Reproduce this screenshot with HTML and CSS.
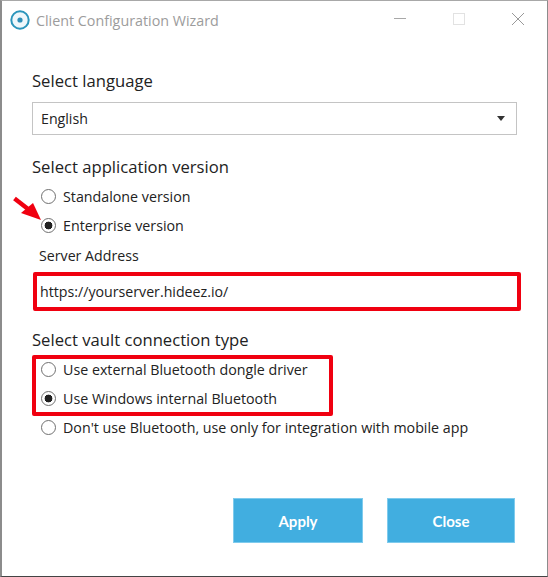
FILE: index.html
```html
<!DOCTYPE html>
<html lang="en">
  <head>
    <meta charset="UTF-8" />
    <title>Client Configuration Wizard</title>
    <link rel="stylesheet" href="styles.css">
  </head>
  <body>
    <main class="window">
      <header class="titlebar">
        <svg class="app-icon" width="20" height="20" viewBox="0 0 20 20">
          <circle cx="10" cy="10" r="8.7" fill="#eef7fb" stroke="#2b95bb" stroke-width="2"/>
          <circle cx="10" cy="10" r="2.6" fill="#2f8fb8"/>
        </svg>
        <span class="title">Client Configuration Wizard</span>
        <div class="controls">
          <svg width="14" height="14" viewBox="0 0 14 14"><path d="M1 6.5H13" stroke="#a8a8a8"/></svg>
          <svg width="14" height="14" viewBox="0 0 14 14"><rect x="1.5" y="1.5" width="11" height="11" fill="none" stroke="#e2e2e2"/></svg>
          <svg width="14" height="14" viewBox="0 0 14 14"><path d="M1 1L13 13M13 1L1 13" stroke="#999"/></svg>
        </div>
      </header>

      <section class="content">
        <h2 class="heading heading-language">Select language</h2>
        <div class="select">
          <span>English</span>
          <span class="caret"></span>
        </div>

        <h2 class="heading heading-version">Select application version</h2>
        <div class="options">
          <div class="option"><span class="radio"></span>Standalone version</div>
          <div class="option"><span class="radio checked"></span>Enterprise version</div>
          <svg class="arrow" width="30" height="26" viewBox="0 0 30 26">
            <path d="M1.5 2.5L15 13" stroke="#f00010" stroke-width="4.4"/>
            <path d="M28 24L8 17L20 7Z" fill="#f00010"/>
          </svg>
        </div>

        <label class="field-label">Server Address</label>
        <div class="address">https://yourserver.hideez.io/</div>

        <h2 class="heading heading-vault">Select vault connection type</h2>
        <div class="highlight">
          <div class="option"><span class="radio"></span>Use external Bluetooth dongle driver</div>
          <div class="option"><span class="radio checked"></span>Use Windows internal Bluetooth</div>
        </div>
        <div class="option option-last"><span class="radio"></span>Don't use Bluetooth, use only for integration with mobile app</div>
      </section>

      <footer class="actions">
        <button class="btn btn-apply">Apply</button>
        <button class="btn btn-close">Close</button>
      </footer>
    </main>
  </body>
</html>
```

FILE: styles.css
```css
html,
body {
  margin: 0;
  height: 100%;
  background-color: #fff;
}
body {
  font-family: "Open Sans", sans-serif;
  color: #222;
}
.window {
  box-sizing: border-box;
  width: 548px;
  height: 577px;
  display: flex;
  flex-direction: column;
  border-top: 1px solid #a8a8a8;
  border-left: 2px solid #8c8c8c;
  border-right: 1px solid #8c8c8c;
  border-bottom: 1px solid #444;
  background-color: #fff;
}
.titlebar {
  display: flex;
  align-items: center;
  height: 38px;
  padding-left: 8px;
}
.title {
  margin-left: 6px;
  font-size: 14.3px;
  color: #9c9c9c;
}
.controls {
  margin-left: auto;
  margin-right: 22px;
  margin-bottom: 2px;
  display: flex;
  gap: 45px;
}
.content {
  padding: 0 30px;
}
.heading {
  margin: 0;
  font-size: 16.65px;
  font-weight: 400;
  line-height: 24px;
}
.heading-language {
  margin-top: 30px;
}
.select {
  display: flex;
  justify-content: space-between;
  align-items: center;
  box-sizing: border-box;
  height: 33px;
  margin-top: 9px;
  padding: 0 11px 0 8px;
  border: 1px solid #c4c4c4;
  font-size: 14.2px;
}
.caret {
  width: 0;
  height: 0;
  border-left: 4.5px solid transparent;
  border-right: 4.5px solid transparent;
  border-top: 5px solid #333;
}
.heading-version {
  margin-top: 20px;
}
.options {
  position: relative;
  margin-top: 3px;
}
.option {
  display: flex;
  align-items: center;
  gap: 7px;
  height: 29px;
  padding-left: 9px;
  font-size: 14.25px;
}
.radio {
  box-sizing: border-box;
  width: 15px;
  height: 15px;
  border: 1px solid #707070;
  border-radius: 50%;
  background-color: #fff;
  flex-shrink: 0;
}
.checked {
  background: radial-gradient(circle, #222 0 3.6px, #fff 4.2px);
}
.arrow {
  position: absolute;
  left: -19px;
  top: 14px;
}
.field-label {
  display: block;
  margin-top: 6px;
  padding-left: 7px;
  font-size: 14.2px;
  line-height: 20px;
}
.address {
  display: flex;
  align-items: center;
  box-sizing: border-box;
  width: 488px;
  height: 39px;
  margin: 6px 0 0 1px;
  padding: 0 0 0 3px;
  border: 4px solid #f00010;
  border-radius: 2px;
  font-size: 14.2px;
}
.heading-vault {
  margin-top: 17px;
}
.highlight {
  box-sizing: border-box;
  display: flex;
  flex-direction: column;
  gap: 9px;
  width: 301px;
  height: 61px;
  margin: 3px 0 0 0;
  border: 4px solid #f00010;
  border-radius: 2px;
}
.highlight .option {
  height: 20px;
  padding-left: 5px;
}
.option-last {
  height: 22px;
}
.actions {
  display: flex;
  gap: 24px;
  margin-top: auto;
  margin-bottom: 33px;
  padding-left: 231px;
}
.btn {
  height: 45px;
  border: 1px solid #7fcbed;
  background-color: #41aee0;
  color: #fff;
  font-family: "Lato", sans-serif;
  font-size: 15px;
  font-weight: 700;
}
.btn-apply {
  width: 130px;
}
.btn-close {
  width: 128px;
}
```
